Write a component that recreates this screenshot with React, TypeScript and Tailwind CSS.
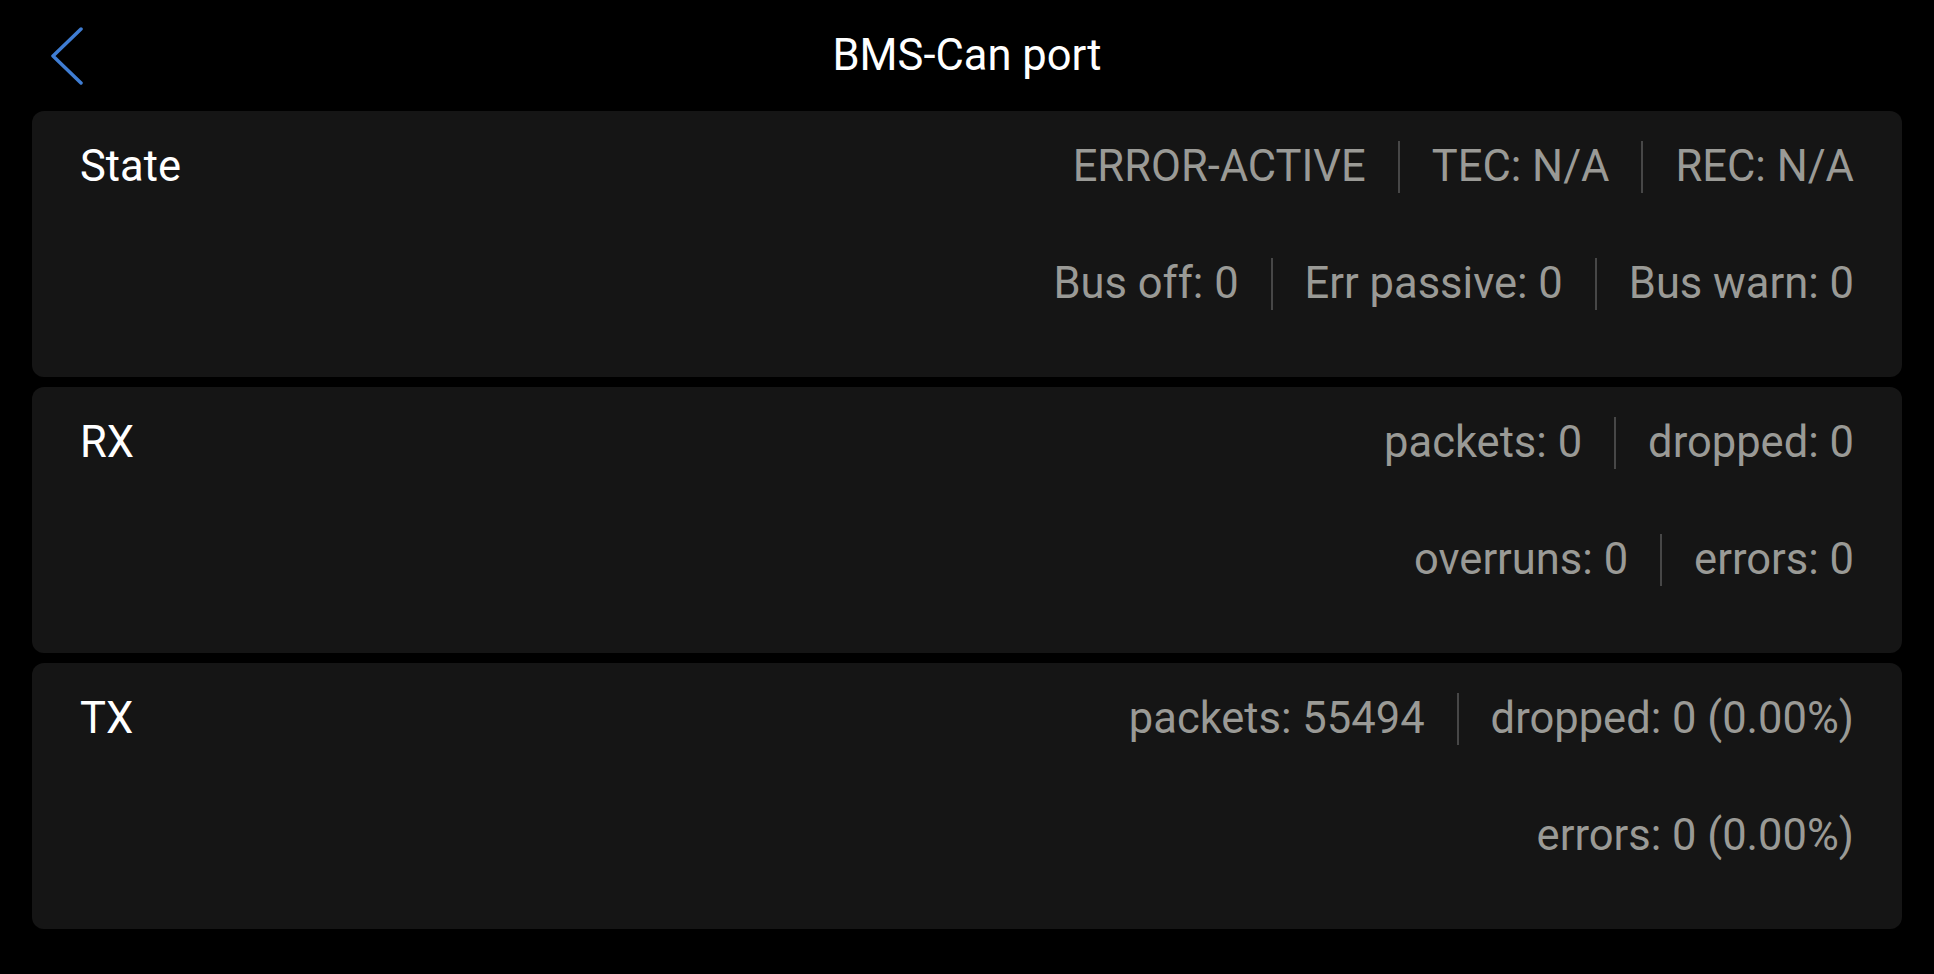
import React from "react";

type Row = string[];

interface StatCardProps {
    label: string;
    rows: Row[];
}

const StatCard: React.FC<StatCardProps> = ({ label, rows }) => {
    return (
        <div className="h-[266px] rounded-xl bg-[#151515] px-[48px] pt-[30px] flex justify-between">
            <div className="h-[52px] flex items-center text-[43.5px] leading-none text-white">{label}</div>
            <div className="flex flex-col items-end gap-[65px]">
                {rows.map((row, i) => (
                    <div key={i} className="h-[52px] flex items-center text-[43.5px] leading-none text-[#9a9a96]">
                        {row.map((item, j) => (
                            <React.Fragment key={j}>
                                {j > 0 && <div className="w-[2px] h-[52px] bg-[#474747] mx-[32px]" />}
                                <span className="whitespace-nowrap">{item}</span>
                            </React.Fragment>
                        ))}
                    </div>
                ))}
            </div>
        </div>
    );
};

export default function App() {
    return (
        <div className="min-h-screen bg-black font-['Roboto',sans-serif]">
            <div className="h-[111px] grid grid-cols-[1fr_auto_1fr] items-center">
                <div className="pl-[50px] flex items-center">
                    <svg width="34" height="58" viewBox="0 0 34 58" fill="none">
                        <path d="M31 2 L3 29 L31 56" stroke="#3f7dd3" strokeWidth="3.5" strokeLinecap="round" strokeLinejoin="round" />
                    </svg>
                </div>
                <h1 className="text-[43.5px] leading-none text-white">BMS-Can port</h1>
                <div />
            </div>
            <div className="px-[32px] flex flex-col gap-[10px]">
                <StatCard
                    label="State"
                    rows={[
                        ["ERROR-ACTIVE", "TEC: N/A", "REC: N/A"],
                        ["Bus off: 0", "Err passive: 0", "Bus warn: 0"],
                    ]}
                />
                <StatCard
                    label="RX"
                    rows={[
                        ["packets: 0", "dropped: 0"],
                        ["overruns: 0", "errors: 0"],
                    ]}
                />
                <StatCard
                    label="TX"
                    rows={[
                        ["packets: 55494", "dropped: 0 (0.00%)"],
                        ["errors: 0 (0.00%)"],
                    ]}
                />
            </div>
        </div>
    );
}
